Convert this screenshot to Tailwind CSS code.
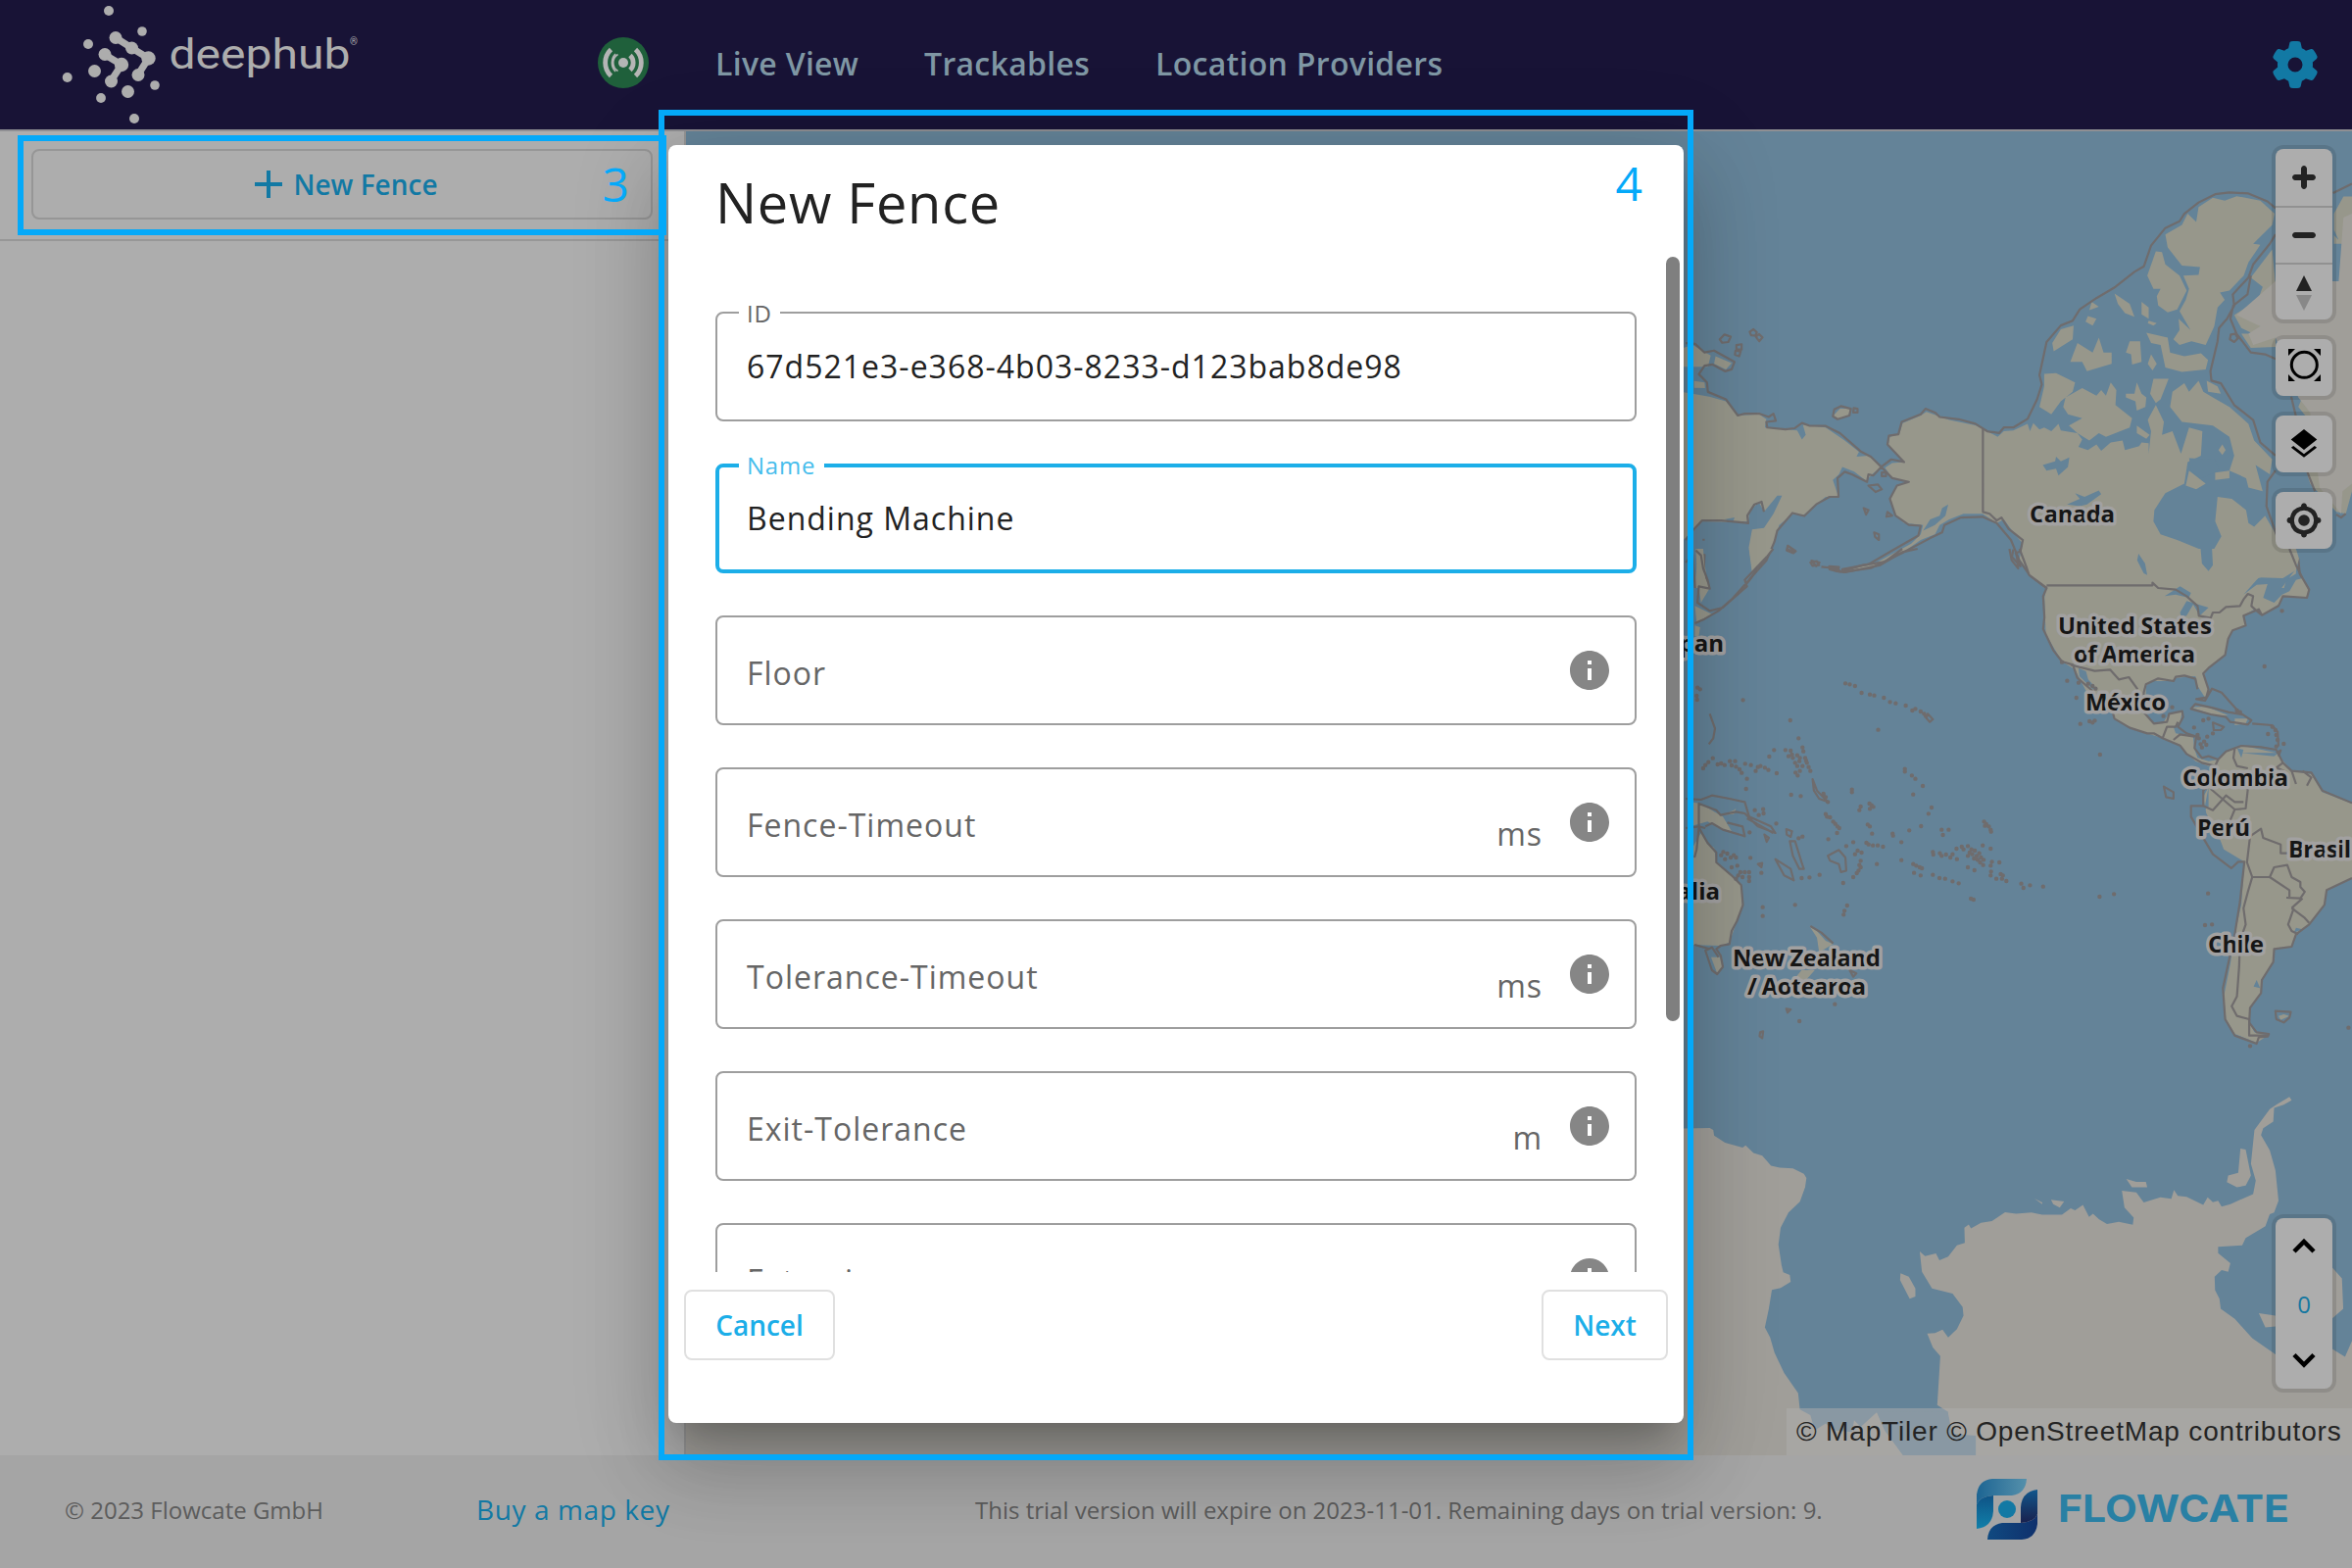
<!DOCTYPE html>
<html lang="en">
<head>
<meta charset="utf-8">
<title>deephub – New Fence</title>
<script src="https://cdn.jsdelivr.net/npm/@tailwindcss/browser@4"></script>
</head>
<body class="relative flex h-[1600px] w-[2400px] flex-col overflow-hidden bg-[#a5a5a5] font-['Open_Sans',sans-serif]">

<header class="flex h-[134px] w-full shrink-0 items-start border-b-2 border-[#8f8f93] bg-[#181336]">
  <svg class="h-[132px] w-[600px] shrink-0" viewBox="0 0 600 132" fill="#adadad">
    <g stroke="#adadad" stroke-linecap="round" stroke-linejoin="round" fill="none">
      <path d="M118 38.500L134.500 49L151.500 59.500L141 76" stroke-width="7"/>
      <path d="M106.500 55.500L124 66L113 83" stroke-width="7"/>
    </g>
    <circle cx="111" cy="11" r="5"/><circle cx="145" cy="32" r="4.800"/><circle cx="90" cy="45" r="5"/>
    <circle cx="118" cy="38.500" r="6.500"/><circle cx="134.500" cy="49" r="6.500"/><circle cx="151.500" cy="59.500" r="7.200"/><circle cx="141" cy="76.500" r="6.500"/>
    <circle cx="107" cy="55.500" r="6.500"/><circle cx="124" cy="66" r="7.200"/><circle cx="113.500" cy="83" r="6.500"/>
    <circle cx="96.500" cy="72.500" r="6.500"/><circle cx="68.700" cy="79" r="5"/><circle cx="130.500" cy="93.500" r="6.500"/>
    <circle cx="158" cy="87" r="4.800"/><circle cx="103" cy="100" r="4.900"/><circle cx="137" cy="121" r="5"/>
    <text x="172.500" y="70" font-family="Roboto" font-size="42" font-weight="400" textLength="185" lengthAdjust="spacingAndGlyphs">deephub</text>
    <text x="357" y="46" font-family="Roboto" font-size="10">®</text>
  </svg>
  <div class="flex h-[132px] w-[130px] shrink-0 items-center pt-0 pl-[9px] pb-1">
    <svg class="h-[54px] w-[54px]" viewBox="-27 -27 54 54" fill="none" stroke="#b5b5b5">
      <circle r="26" fill="#1f603b" stroke="none"/>
      <circle r="5" fill="#b5b5b5" stroke="none"/>
      <path d="M-12.500 -13.500A18.500 18.500 0 0 0 -12.500 13.500M12.500 -13.500A18.500 18.500 0 0 1 12.500 13.500" stroke-width="4.800"/>
      <path d="M7 -7.500A10.500 10.500 0 0 1 7 7.500" stroke-width="4.800"/>
      <path d="M-5.500 -8.500A10 10 0 0 0 -5.500 8.500M-8 -9A13 13 0 0 0 -8 9" stroke-width="1.600"/>
    </svg>
  </div>
  <nav class="flex h-[129px] grow items-center text-[32px] font-semibold tracking-[0.3px] whitespace-nowrap text-[#7f97a4]">
    <a class="w-[213px]">Live View</a><a class="w-[236px]">Trackables</a><a>Location Providers</a>
  </nav>
  <svg class="mt-[42px] mr-[34px] size-12" viewBox="0 0 512 512" fill="#1279a4"><path d="M495.9 166.6c3.2 8.7 .5 18.4-6.4 24.600l-43.300 39.400c1.100 8.300 1.700 16.800 1.700 25.400s-.6 17.100-1.700 25.400l43.300 39.400c6.900 6.200 9.600 15.900 6.400 24.600c-4.400 11.900-9.700 23.300-15.800 34.300l-4.700 8.100c-6.600 11-14 21.400-22.100 31.200c-5.900 7.200-15.700 9.600-24.500 6.800l-55.700-17.700c-13.400 10.300-28.200 18.900-44 25.400l-12.500 57.100c-2 9.100-9 16.300-18.200 17.800c-13.800 2.300-28 3.500-42.500 3.500s-28.700-1.200-42.500-3.500c-9.200-1.500-16.200-8.700-18.200-17.800l-12.500-57.100c-15.800-6.500-30.600-15.100-44-25.400L83.100 425.900c-8.800 2.800-18.600 .3-24.500-6.800c-8.100-9.800-15.500-20.200-22.100-31.200l-4.700-8.100c-6.100-11-11.400-22.400-15.800-34.300c-3.200-8.700-.5-18.400 6.400-24.600l43.300-39.400C64.600 273.100 64 264.600 64 256s.6-17.100 1.700-25.400L22.400 191.200c-6.900-6.200-9.600-15.900-6.400-24.600c4.400-11.900 9.700-23.300 15.800-34.300l4.700-8.100c6.600-11 14-21.400 22.100-31.200c5.900-7.200 15.700-9.600 24.500-6.800l55.700 17.700c13.400-10.300 28.200-18.900 44-25.400l12.500-57.100c2-9.100 9-16.300 18.200-17.800C227.300 1.200 241.500 0 256 0s28.700 1.200 42.500 3.500c9.200 1.500 16.200 8.700 18.200 17.800l12.500 57.100c15.800 6.500 30.600 15.100 44 25.400l55.700-17.700c8.800-2.800 18.600-.3 24.500 6.800c8.100 9.800 15.500 20.200 22.100 31.200l4.700 8.100c6.100 11 11.400 22.400 15.800 34.300zM256 336a80 80 0 1 0 0-160 80 80 0 1 0 0 160z"/></svg>
</header>

<main class="flex h-[1351px] w-full shrink-0">
  <aside class="flex w-[700px] shrink-0 border-r-2 border-[#959595] bg-[#a1a1a1] pr-[6px]">
    <div class="flex grow flex-col bg-[#adadad]">
      <div class="h-[112px] w-[698px] border-b-2 border-[#979797] pt-[18px] pl-8">
        <button class="flex h-[72px] w-[634px] items-center justify-center gap-[11px] rounded-lg border-2 border-[#969696] pl-[9px] text-[28px] font-semibold text-[#1279a4]">
          <svg class="size-7" viewBox="0 0 28 28" stroke="#1279a4" stroke-width="4"><path d="M14 0V28M0 14H28"/></svg>
          <span>New Fence</span>
        </button>
      </div>
    </div>
  </aside>

  <section class="relative w-[1700px] overflow-hidden bg-[#648398]">
    <svg class="block h-[1351px] w-[1700px]" viewBox="700 134 1700 1351">
      <!-- northern hemisphere -->
      <g transform="translate(1640 0) scale(.48469 .38265)">
        <g fill="#97978b">
          <path d="M155 1045L215 1058L250 1070L275 1108L320 1105L335 1118L332 1140L400 1148L410 1172L418 1160L412 1133L460 1140L500 1175L530 1205L525 1218L550 1215L577 1245L560 1262L545 1282L520 1258L495 1245L488 1265L475 1280L487 1325L460 1325L440 1345L415 1372L390 1372L362 1400L352 1445L330 1500L305 1528L298 1460L305 1412L330 1408L350 1370L368 1322L358 1322L330 1365L320 1340L300 1360L297 1390L260 1392L200 1390L180 1420L155 1445Z"/>
          <path d="M155 930L180 920L218 948L212 978H155ZM228 950L262 968L250 985L225 970ZM183 1016L205 1020L206 1035L183 1034ZM475 1110L490 1090L512 1090L508 1108L485 1117ZM190 1480L205 1500L212 1568H185Z"/>
          <path d="M585 1247L600 1235L625 1232L592 1185L595 1165L615 1158L622 1128L660 1108L672 1098L720 1120L775 1134L800 1150L822 1165L835 1150L855 1148L885 1130L890 1150L897 1128L910 1145L920 1140L935 1150L950 1130L955 1148L990 1155L1000 1172L992 1192L1012 1200L1030 1185L1040 1202L1060 1180L1085 1175L1090 1200L1120 1190L1125 1180L1140 1182V1210L1145 1150L1138 1120L1155 1080L1172 1125L1168 1160L1190 1150L1208 1210L1225 1140L1253 1150L1250 1215L1222 1232L1215 1290L1175 1315L1152 1360L1150 1390L1165 1425L1200 1440L1248 1465L1247 1500L1270 1525L1275 1470L1293 1430L1280 1390L1285 1325L1315 1330L1345 1360L1350 1395L1362 1405L1385 1375L1410 1430L1440 1465L1452 1490L1450 1530L1430 1545L1425 1568H920L890 1530L868 1490L875 1450L855 1420L835 1385L820 1395L790 1370L750 1370L720 1385L700 1400L690 1425L660 1440L620 1475L560 1510L500 1525L495 1520L560 1505L640 1450L660 1425L665 1400L625 1395L605 1370L597 1330L610 1295L635 1285L600 1275Z"/>
          <path d="M1175 625L1210 600L1222 570L1240 592L1245 552L1275 527L1300 535L1325 523L1375 535L1405 570L1400 600L1360 650L1375 653L1350 700L1340 735L1310 775L1290 780L1300 800L1285 820L1278 870L1260 920L1230 910L1205 920L1192 905L1205 880L1203 850L1228 880L1205 830L1218 800L1225 770L1213 735L1245 733L1248 712L1210 708L1180 660Z"/>
          <path d="M1155 670L1168 672L1175 705L1205 735L1220 775L1200 825L1180 833L1160 815L1157 790L1165 770L1150 770L1137 735ZM1068 783L1100 810L1110 845L1090 835L1075 810ZM1020 805L1035 818L1015 827ZM1012 843L1030 850L1022 868L1007 858ZM1125 805L1140 820L1140 850L1125 838ZM982 868L980 905L940 937L937 915L955 878ZM990 915L1022 940L1035 900L1045 940L1062 940L1062 970L1010 990L1000 965L975 965ZM1100 910L1122 910L1125 965L1105 972L1103 945L1092 940ZM1145 945L1157 970L1148 988L1138 970ZM1140 855L1157 862L1150 868L1138 862ZM1135 887L1180 900L1185 940L1215 950L1250 942L1265 960L1260 985L1210 992L1175 980L1165 920L1145 915ZM920 997L945 995L985 1020L980 1045L955 1070L935 1105L910 1085L920 1030ZM965 1060L1000 1035L1030 1055L1040 1040L1050 1055L1060 1020L1072 1040L1070 1080L1105 1115L1100 1140L1050 1165L1035 1155L1015 1175L990 1155L972 1135L1000 1115L970 1105L960 1085ZM1092 1050L1110 1050L1115 1020L1125 1050L1135 1060L1133 1085L1115 1095L1112 1070L1092 1060ZM1150 1010L1182 1010L1165 1065L1155 1075L1143 1050ZM1115 1135L1142 1160L1135 1170L1115 1155ZM1190 1045L1215 1022L1225 1045L1245 1015L1255 1045L1275 1060L1310 1085L1350 1130L1362 1175L1400 1225L1395 1265L1365 1240L1380 1310L1350 1300L1345 1275L1310 1255L1310 1275L1280 1280V1260L1310 1255L1320 1215L1310 1165L1275 1135L1210 1125L1185 1085ZM1262 1015L1285 1030L1292 1050L1265 1045ZM1225 1255L1260 1290L1240 1305L1218 1295ZM1295 1185L1302 1200L1295 1213L1287 1200Z"/>
          <path d="M1355 740L1400 665L1407 760L1380 800L1350 840L1375 870L1407 900V925L1355 928L1335 890L1360 890L1335 875L1320 840L1370 800L1380 765ZM1530 570L1550 524H1568V650H1530ZM1455 1085L1465 1055L1500 1100L1568 1290V1310L1555 1370L1535 1365L1480 1290L1470 1250L1490 1140Z"/>
        </g>
        <path fill="#a09e99" d="M1325 840L1407 750H1540L1550 580L1568 570V1290L1548 1310L1545 1370L1500 1300L1480 1100L1455 1060L1407 900L1360 920L1350 890L1375 870Z"/>
        <path fill="#648398" d="M917 1240L943 1230L945 1218L955 1230L973 1220L970 1245L950 1268L945 1250L925 1255ZM968 1345L995 1330L985 1315L1005 1325L1035 1308L1040 1318L1010 1345L995 1350ZM1120 1478L1130 1500L1138 1535L1130 1530L1115 1500ZM247 1385L268 1380L265 1392ZM1530 612L1540 640L1528 625ZM718 1345L712 1375L690 1400L665 1415L680 1385L700 1375L705 1355ZM1245 1470L1265 1465V1480ZM1352 1550L1380 1538L1420 1540L1440 1515L1448 1520L1420 1568H1345ZM1225 1222L1280 1225L1288 1255L1250 1275L1230 1255Z"/>
        <g fill="none" stroke="#6f6c6d" stroke-width="2.200" stroke-linejoin="round">
          <path vector-effect="non-scaling-stroke" d="M165 915L185 917L205 940L225 935L268 965L262 985L248 990L222 972L205 975L193 998L210 1020L212 1045L250 1065L275 1108L290 1103L320 1103L340 1112L350 1103L355 1122L335 1125L337 1140L375 1145L395 1142L410 1128L425 1135L460 1136L490 1155L535 1205L555 1218L577 1245L598 1225L625 1232L590 1185L593 1162L613 1158L620 1125L660 1105L670 1090L690 1100L700 1112L740 1118L775 1130L800 1150L825 1155L835 1140L855 1140L885 1117L905 1065L915 1025L910 1000L925 912L955 868L980 855L995 825L1030 795L1070 765L1110 725L1130 710L1145 655L1175 608L1205 590L1215 570L1245 540L1280 518L1310 513L1350 516L1390 537L1407 555"/>
          <path vector-effect="non-scaling-stroke" d="M1407 625L1395 650L1360 705L1350 740L1317 785L1320 815L1305 850L1288 875L1285 910L1270 990L1272 1015L1292 1022L1320 1080L1360 1120L1375 1180L1407 1215M1407 1255L1390 1285L1388 1350L1410 1430L1440 1465L1455 1490L1458 1530L1475 1568M1355 735L1348 785L1318 815L1312 850L1325 890L1355 940L1385 945L1407 957M1440 1058L1450 1110L1452 1160L1475 1262L1490 1310M1535 1372L1545 1380L1555 1370M1528 515L1568 490M1328 902L1320 912L1311 905L1313 892L1322 890Z"/>
          <path vector-effect="non-scaling-stroke" d="M577 1245L560 1268L550 1265L547 1285L515 1265L500 1258L485 1275L487 1325L468 1325L440 1345L415 1376L390 1368L358 1415L352 1445L335 1495L310 1530L298 1550L285 1568M330 1365L325 1338L310 1345L295 1375L297 1395L240 1388L200 1388L180 1415L165 1440M577 1245L600 1275L635 1285L610 1295L595 1330L607 1375L635 1400L660 1402L655 1428L600 1468L550 1505L495 1518L497 1525L555 1515L620 1475L680 1435L705 1420L710 1400L745 1380L790 1378L820 1395L850 1440L868 1495L890 1535L925 1568"/>
          <path vector-effect="non-scaling-stroke" d="M791 1142V1365L805 1370L820 1388L830 1380L845 1410L875 1440L870 1470L860 1475L870 1510L852 1485L855 1465M925 1560H1148V1553L1160 1568M475 1110L478 1092L492 1083L513 1090L510 1108L485 1118ZM519 1088L527 1090V1100L518 1100ZM550 1295L570 1292L578 1305L565 1312ZM540 1355L550 1360L545 1372ZM562 1420L572 1425V1440L564 1432ZM380 1455L397 1470L392 1475L378 1468ZM430 1495L447 1500L440 1510ZM468 1510L488 1512L485 1524L468 1518ZM578 1260H587V1270H578ZM237 905L247 892L260 898L255 912L242 914ZM272 920L283 918V932H272ZM270 935L281 937L278 950L269 946ZM300 885L308 878L315 886L312 895L303 894ZM313 898L320 891L327 900L320 910ZM203 1437V1442M165 1500L180 1480L185 1568M190 1475L205 1480L203 1530L215 1568M590 1365L600 1375L588 1378Z"/>
        </g>
      </g>
      <!-- Pacific and the Americas -->
      <g transform="translate(1700 560) scale(.44643 .33333)">
        <g fill="#97978b">
          <path d="M815 0H1440L1447 30L1440 65L1410 90L1355 88L1320 140L1350 110L1375 108L1365 150L1390 165L1408 140L1425 130L1440 95L1455 90L1470 125L1465 150L1410 145L1400 170L1365 200L1345 185L1320 205L1325 235L1295 250L1285 280L1278 325L1240 365L1230 385L1240 430L1232 455L1215 420L1210 390L1165 395L1160 405L1110 405L1097 420V500L1110 530L1135 535L1150 505L1180 497L1175 530L1160 545L1165 565L1205 575L1207 610L1215 640L1240 650L1262 645L1280 620L1320 603L1395 625L1430 680L1475 690L1500 745L1568 780V1010L1510 1045L1505 1090L1470 1150L1440 1180L1430 1220L1390 1225L1388 1265L1360 1320L1360 1365L1335 1405L1333 1450L1345 1480L1375 1490L1350 1512L1300 1485L1280 1440L1275 1370L1290 1270L1300 1180L1315 1090L1322 958L1275 920L1265 885L1235 810L1228 760L1240 730L1262 690V662L1240 665L1210 650L1190 625L1175 600L1135 580L1105 567L1060 545L1025 520L1015 490L960 435L935 370L905 345L885 300L868 260L865 150L870 120L830 80Z"/>
          <path d="M190 0H245L215 40L198 72ZM68 0H85L90 90L100 120L80 165L72 90ZM66 175L105 200L70 225ZM66 235L78 240L75 268H66ZM55 775L80 780L110 805L130 820L150 865L120 855L95 835L55 850ZM155 800L160 795L155 812L130 815ZM50 940L80 870L95 905L110 915L115 960L150 1000L172 1030L174 1090L162 1140L145 1205L125 1215L50 1212ZM103 1250H128V1280L117 1300ZM328 1155L345 1170L365 1200L382 1210L350 1235L345 1190ZM285 1330L310 1290L340 1290L320 1320ZM1200 485L1235 483L1285 510L1260 512ZM1300 520L1330 520L1325 535L1300 540ZM1400 1430L1412 1425L1425 1430L1405 1442Z"/>
        </g>
        <path fill="#648398" d="M1080 15L1095 45L1100 80L1092 75L1077 35ZM1222 0H1248L1250 50L1240 68L1225 45ZM1140 145L1175 115L1200 135L1195 150L1165 140ZM1175 195L1190 160L1240 180L1220 205L1205 170L1190 205L1178 210ZM943 365L960 375L965 400L985 430L975 430L945 390ZM1305 610L1320 615L1315 640ZM1315 625L1400 625L1390 635ZM1350 1320L1358 1345L1343 1340ZM1240 730L1230 800L1240 790ZM1440 1160L1455 1165L1435 1175Z"/>
        <g fill="none" stroke="#6f6c6d" stroke-width="2.200" stroke-linejoin="round">
          <path vector-effect="non-scaling-stroke" d="M785 0L790 35L805 60L802 20M808 0L825 60L830 80L870 120L862 145L865 210L862 245L885 310L905 345L930 355L940 395L975 435M870 112H1112V104L1125 120L1165 125L1190 145L1215 175L1218 205L1245 212L1250 195L1265 195L1280 178L1312 175L1320 155L1330 138L1342 145L1338 175L1350 190L1362 203L1400 175L1410 145L1465 150L1470 125L1455 90L1440 50L1425 0M1362 203L1355 185L1320 205L1325 235L1295 250L1285 275L1278 325L1240 365L1228 382L1240 430L1235 455L1212 460L1232 465L1248 428L1270 440L1310 500L1338 525L1330 538L1290 530L1280 515L1245 507L1200 490L1210 475L1250 487L1285 500L1320 508"/>
          <path vector-effect="non-scaling-stroke" d="M1215 430L1210 398L1185 388L1165 392L1160 405L1125 397L1097 415L1092 440V500L1115 535L1145 530L1150 505L1180 497L1182 515L1170 545L1190 565L1212 575L1208 610L1225 640L1240 635L1262 645L1280 620L1315 603L1360 607L1395 615L1410 655L1430 680L1475 685L1500 740L1568 778M1568 1008L1510 1045L1505 1090L1470 1150L1440 1180L1430 1218L1390 1225L1388 1265L1362 1320L1360 1360L1335 1405L1333 1450L1350 1480L1378 1485L1375 1493L1355 1495L1350 1515L1300 1490L1278 1440L1273 1345L1290 1240L1300 1180L1312 1080L1322 958L1308 958L1292 978L1250 935L1230 890L1200 820V787H1228V740L1250 712M1262 645L1255 665L1225 655L1190 628L1175 602L1135 580L1115 565H1100L1060 548L1025 520L1020 495"/>
          <path vector-effect="non-scaling-stroke" d="M925 355L980 374L1015 370L1035 400L1058 393L1078 430M1135 580L1145 545H1165L1170 530M1160 585L1175 568L1208 575M1300 610L1297 640L1305 665L1330 672M1410 655L1395 670L1420 685M1455 680L1475 700L1465 725M1430 680L1440 720M1330 735L1325 795L1300 798L1245 735M1228 787L1250 800L1280 755L1300 775L1320 775M1300 798L1290 830M1335 880L1360 857L1365 885L1405 905V932H1420M1335 880L1328 960L1340 1005L1380 1005L1390 975L1420 968L1430 1005L1450 1020V1035L1460 1050L1450 1070L1418 1068M1380 1005L1425 1045V1065M1435 1100L1422 1150L1430 1170L1445 1180M1430 1100L1460 1130L1470 1145M1430 1100L1455 1070M1340 1005L1330 1050L1320 1100L1325 1150L1312 1200L1310 1280L1305 1370L1293 1400L1305 1430L1333 1440V1490L1378 1490M1250 532L1275 545L1268 555L1252 555ZM1138 728L1160 745V765L1143 760ZM1393 1415L1428 1418L1425 1435L1412 1450L1395 1440ZM1340 535L1385 540L1398 560L1400 605M1395 625L1405 617L1400 635"/>
          <path vector-effect="non-scaling-stroke" d="M245 0L190 95L150 155L120 190L88 215L66 228M230 25L180 95L185 115L130 180L100 190L72 165L75 115L100 122L95 95L85 60L80 20L68 5M275 0L295 10M330 42L345 38L350 50L335 52ZM370 55L395 70L410 72L490 50L540 10L575 0M355 55L390 60L400 70L450 50L500 40L540 0M45 765L80 768L105 755L145 765L180 775L190 820L240 850L250 870L210 850L180 810L160 805L125 815L115 800L75 780V850L90 855M90 850L105 840L130 860L180 880L175 850L140 838M45 855L75 850L80 865L95 900L115 930L115 960L150 1000L172 1030L176 1090L162 1140L150 1170L145 1210L125 1215L115 1225L125 1245L130 1280L117 1302L105 1290L90 1230L105 1220L120 1250M65 1212L100 1225M75 855L70 920L65 945M283 895L295 895L310 960L315 980L305 980L290 940ZM250 950L285 980L292 1015L270 1000ZM370 940L395 922L410 945L412 985L400 990L395 965L375 955ZM335 705L345 740L370 775L350 765L338 740ZM225 875L235 885L230 897ZM275 858L288 865L285 882L276 875ZM185 825L245 870M330 1155L355 1175L382 1208M420 1290L435 1300L428 1310ZM275 1408L285 1410L278 1420ZM215 1480L222 1477L220 1498L214 1492ZM598 505L610 522L603 530L595 518ZM210 965L220 962L218 975ZM100 505L112 550L108 580L98 598"/>
        </g>
        <path vector-effect="non-scaling-stroke" fill="none" stroke="#6f6c6d" stroke-width="4.400" stroke-linecap="round" d="M410 412h0M420 415h0M432 420h0M447 441h0M466 446h0M476 449h0M498 456h0M512 469h0M525 473h0M548 480h0M563 495h0M570 490h0M582 498h0M590 505h0M594 512h0M176 463h0M284 525h0M485 554h0M303 580h0M247 616h0M236 636h0M273 616h0M285 618h0M312 608h0M314 620h0M280 635h0M290 640h0M300 632h0M306 640h0M295 655h0M305 650h0M318 640h0M322 655h0M312 665h0M300 665h0M326 668h0M330 680h0M306 680h0M296 685h0M301 694h0M320 648h0M288 630h0M97 653h0M107 641h0M90 662h0M85 672h0M118 660h0M126 657h0M134 662h0M146 650h0M158 650h0M150 663h0M160 667h0M168 675h0M173 686h0M181 658h0M194 662h0M185 704h0M205 680h0M210 668h0M216 665h0M226 670h0M234 677h0M253 687h0M183 735h0M286 753h0M308 757h0M360 750h0M365 760h0M370 775h0M425 737h0M425 745h0M546 674h0M546 682h0M562 694h0M570 704h0M587 726h0M565 752h0M445 789h0M442 800h0M465 780h0M470 785h0M474 790h0M466 796h0M607 792h0M600 811h0M222 797h0M223 810h0M203 800h0M212 815h0M252 841h0M365 812h0M368 820h0M375 822h0M382 835h0M387 842h0M392 850h0M396 855h0M461 844h0M466 850h0M471 872h0M583 849h0M556 862h0M518 872h0M519 878h0M391 870h0M371 889h0M312 881h0M303 886h0M428 898h0M458 900h0M463 905h0M473 908h0M484 908h0M496 912h0M538 898h0M630 860h0M646 860h0M633 876h0M727 835h0M732 843h0M738 850h0M742 860h0M729 848h0M743 866h0M610 928h0M611 936h0M626 932h0M630 940h0M640 936h0M650 945h0M655 935h0M664 918h0M665 950h0M676 912h0M680 920h0M690 910h0M698 920h0M706 924h0M694 930h0M690 940h0M700 935h0M710 940h0M716 932h0M704 948h0M712 952h0M720 945h0M726 952h0M718 960h0M725 968h0M724 908h0M742 918h0M745 958h0M762 960h0M742 970h0M743 988h0M742 1000h0M755 1010h0M765 996h0M770 1000h0M768 1010h0M778 1017h0M690 975h0M705 984h0M812 1025h0M817 1038h0M832 1030h0M862 1034h0M991 1065h0M1024 1057h0M697 1071h0M703 1074h0M669 1024h0M655 1018h0M638 1010h0M625 1008h0M610 998h0M582 1000h0M567 992h0M538 953h0M565 965h0M572 970h0M580 975h0M585 978h0M482 965h0M447 930h0M438 924h0M432 935h0M412 910h0M445 955h0M442 968h0M445 975h0M440 985h0M436 993h0M428 1005h0M405 1023h0M351 998h0M328 1006h0M310 1008h0M218 992h0M295 1090h0M221 1097h0M221 1124h0M414 1092h0M408 1108h0M406 1120h0M131 928h0M126 938h0M140 933h0M148 945h0M155 938h0M160 945h0M135 950h0M150 975h0M163 970h0M170 990h0M180 990h0M190 990h0M190 1005h0M165 1000h0M175 1005h0M160 1010h0M190 1017h0M193 946h0M191 868h0M386 1394h0M305 1446h0M1232 1152h0M1248 1150h0M1239 1055h0M992 630h0M947 536h0M968 528h0M980 526h0M975 532h0M917 404h0M938 456h0M943 410h0M905 347h0M1368 360h0M1408 190h0M1228 525h0M1240 520h0M1207 547h0M1215 570h0M1218 580h0M1222 598h0M1230 590h0M1237 575h0M1235 600h0M1250 565h0M1225 608h0M1376 567h0M1386 545h0M1393 555h0M1395 570h0M1398 585h0M1412 597h0M1395 605h0M1305 495h0M1312 500h0M1335 1522h0M1560 1466h0M1157 485h0M1137 512h0M72 425h0M78 430h0M70 450h0M71 462h0M975 420h0M982 428h0M965 413h0"/>
      </g>
      <!-- Antarctica -->
      <g transform="translate(1700 1060) scale(.44643 .34439)">
        <path fill="#a09e99" d="M-2300 266H40L100 264L108 270L110 287L135 308L175 322L182 316L200 338L220 346L240 376L260 382L290 384L315 400L321 412L318 440L306 483L280 515L262 560L257 610L264 670L268 692L283 700L285 720L262 738L242 744L235 800L226 855L238 885L248 930L270 990L302 1050L306 1098L330 1115L340 1160L365 1140L385 1160L425 1165L430 1130L445 1150L482 1106L500 1160L542 1234H-2300ZM542 1234H708V1176L650 1170L644 1105L620 1085L627 940L610 915L597 873L615 872L632 862L645 885L665 860L680 820L678 795L655 755L608 740L585 690L580 630L592 644L617 636L625 656L645 645L665 612L683 605L682 560L692 550L697 562L720 545L745 540L775 514L800 518L835 515L860 521H905L925 502L935 508L953 492L967 528L976 518L990 535L1008 549L1035 542L1067 551L1069 530L1048 500L1042 450L1075 455L1092 485L1130 470L1155 474L1161 448L1170 465L1190 468L1228 492L1238 470L1250 484L1262 480L1270 497L1290 490L1342 460L1348 420L1337 370L1345 270L1380 208L1395 195L1425 172L1430 182L1412 195L1390 205L1388 245L1365 265L1360 285L1380 330L1393 390L1400 480L1390 515L1380 520L1370 555L1325 590L1317 612L1262 616V635L1290 665L1285 690L1270 685L1254 705L1255 745L1265 770L1268 800L1300 830L1340 887L1393 935L1524 920L1552 942L1568 895V1234H708ZM536 695L555 705L570 740L570 764L557 770L535 715ZM1052 415L1075 424H1097L1100 440L1065 440ZM842 473L860 485V490ZM880 477L910 482L900 500L885 490ZM1313 325L1325 328L1337 405L1325 435L1305 440L1282 425L1285 405L1308 397ZM1355 813L1393 820V852L1370 855ZM1523 678L1545 710L1548 800L1523 828Z"/>
        <path fill="#648398" d="M482 1106L500 1160L542 1234H708V1176H655L644 1105Z"/>
      </g>
      <!-- country labels -->
      <g font-family="Open Sans" font-size="24" font-weight="700" fill="#161616" stroke="#a2a1a1" stroke-width="7" stroke-linejoin="round" paint-order="stroke">
        <text x="2071" y="532.500" textLength="87">Canada</text>
        <text x="2100" y="647" textLength="157">United States</text>
        <text x="2116" y="676" textLength="124">of America</text>
        <text x="2128" y="725" textLength="82">México</text>
        <text x="2227" y="801.500" textLength="108">Colombia</text>
        <text x="2242" y="852.500" textLength="54">Perú</text>
        <text x="2335" y="875" textLength="64">Brasil</text>
        <text x="2253" y="971.500" textLength="57">Chile</text>
        <text x="1768" y="986" textLength="151">New Zealand</text>
        <text x="1783" y="1015" textLength="121">/ Aotearoa</text>
        <text x="1759" y="665" text-anchor="end">Japan</text>
        <text x="1755" y="918" text-anchor="end">Australia</text>
      </g>
    </svg>

    <div class="absolute top-[18px] right-5 flex w-[58px] flex-col gap-5">
      <div class="flex h-[174px] flex-col rounded-lg bg-[#adadad] shadow-[0_0_0_4px_rgba(0,0,0,0.1)]">
        <svg class="h-[58px] w-[58px]" viewBox="0 0 29 29" fill="#222"><path d="M14.500 8.500c-.75 0-1.500.75-1.500 1.500v3h-3c-.75 0-1.500.75-1.500 1.500S9.250 16 10 16h3v3c0 .75.75 1.500 1.500 1.500S16 19.750 16 19v-3h3c.75 0 1.500-.75 1.500-1.500S19.750 13 19 13h-3v-3c0-.75-.75-1.500-1.500-1.500z"/></svg>
        <svg class="h-[58px] w-[58px] border-t-2 border-[#919191]" viewBox="0 0 29 28" fill="#222"><path d="M10 12.500c-.75 0-1.500.75-1.500 1.500S9.250 15.500 10 15.500h9c.75 0 1.500-.75 1.500-1.500S19.750 12.500 19 12.500h-9z"/></svg>
        <svg class="h-[58px] w-[58px] border-t-2 border-[#919191]" viewBox="0 0 29 28" fill="#222"><path d="M10.500 13.500l4-8 4 8z"/><path d="M10.500 15.500l4 8 4-8z" fill="#888"/></svg>
      </div>
      <div class="h-[58px] rounded-lg bg-[#adadad] shadow-[0_0_0_4px_rgba(0,0,0,0.1)]">
        <svg class="size-[58px]" viewBox="0 0 58 58"><circle cx="29.300" cy="26.300" r="13" fill="none" stroke="#000" stroke-width="3"/><path d="M13 10H20L13 17ZM46 10V17L39 10ZM13 43V36L20 43ZM46 43H39L46 36Z"/></svg>
      </div>
      <div class="h-[58px] rounded-lg bg-[#adadad] shadow-[0_0_0_4px_rgba(0,0,0,0.1)]">
        <svg class="size-[58px]" viewBox="0 0 58 58"><path d="M29 14L42.300 24.500L29 35L15.700 24.500ZM15.900 32.800L18.200 31L29 39.300L39.800 31L42.100 32.800L29 42.800Z"/></svg>
      </div>
      <div class="h-[58px] rounded-lg bg-[#adadad] shadow-[0_0_0_4px_rgba(0,0,0,0.1)]">
        <svg class="size-[58px]" viewBox="0 0 20 20" fill="#222"><path d="M10 4C9 4 9 5 9 5v.1A5 5 0 0 0 5.100 9H5s-1 0-1 1 1 1 1 1h.1A5 5 0 0 0 9 14.900v.1s0 1 1 1 1-1 1-1v-.1a5 5 0 0 0 3.900-3.900h.1s1 0 1-1-1-1-1-1h-.1A5 5 0 0 0 11 5.100V5s0-1-1-1zm0 2.500a3.500 3.500 0 1 1 0 7 3.500 3.500 0 1 1 0-7z"/><circle cx="10" cy="10" r="2"/></svg>
      </div>
    </div>

    <div class="absolute right-5 bottom-[68px] flex h-[174px] w-[58px] flex-col items-center justify-between rounded-lg bg-[#adadad] shadow-[0_0_0_4px_rgba(0,0,0,0.1)]">
      <svg class="size-[58px]" viewBox="0 0 58 58" fill="none" stroke="#000" stroke-width="4.500"><path d="M19 34L29 24L39 34"/></svg>
      <span class="pt-0.5 text-2xl text-[#1577a0]">0</span>
      <svg class="size-[58px]" viewBox="0 0 58 58" fill="none" stroke="#000" stroke-width="4.500"><path d="M19 23.500L29 33.500L39 23.500"/></svg>
    </div>

    <div class="absolute right-0 bottom-0 flex h-12 w-[577px] items-center bg-[#adadad]/50 pl-2.5 font-['Liberation_Sans',sans-serif] text-[28px] tracking-[0.83px] whitespace-nowrap text-[#242424]">© MapTiler © OpenStreetMap contributors</div>
  </section>
</main>

<footer class="flex h-[115px] w-full items-center bg-[#a5a5a5] pb-[3px] pl-[66px] text-2xl whitespace-nowrap text-[#5c5c5c]">
  <span class="w-[420px]">© 2023 Flowcate GmbH</span>
  <a class="w-[509px] text-[28px] tracking-[0.6px] text-[#1279a4]">Buy a map key</a>
  <span class="w-[1021px]">This trial version will expire on 2023-11-01. Remaining days on trial version: 9.</span>
  <svg class="-mt-1 h-[70px] w-[330px]" viewBox="2016 1504 330 70">
    <defs>
      <linearGradient id="t"><stop stop-color="#1d6593"/><stop offset="1" stop-color="#5590ab"/></linearGradient>
      <linearGradient id="l" x2="0" y2="1"><stop stop-color="#0f5386"/><stop offset="1" stop-color="#1080aa"/></linearGradient>
      <linearGradient id="r" x2="0" y2="1"><stop stop-color="#11578c"/><stop offset="1" stop-color="#18204d"/></linearGradient>
      <linearGradient id="b"><stop stop-color="#104a81"/><stop offset="1" stop-color="#0f306c"/></linearGradient>
    </defs>
    <path fill="url(#t)" d="M2017 1535V1525Q2019 1510 2033 1509H2068Q2067 1524 2053 1526H2034Q2020 1527 2017 1535Z"/>
    <path fill="url(#l)" d="M2017 1560V1535Q2020 1527 2034 1526V1542Q2033 1558 2017 1560Z"/>
    <path fill="url(#b)" d="M2028 1571Q2029 1556 2043 1554H2062Q2076 1553 2079 1545V1555Q2077 1570 2063 1571Z"/>
    <path fill="url(#r)" d="M2079 1520V1545Q2076 1553 2062 1554V1538Q2063 1522 2079 1520Z"/>
    <circle cx="2048" cy="1540" r="9" fill="#1279a4"/>
    <text x="2100" y="1553" font-family="Inter" font-size="38.500" font-weight="700" fill="#2980a4" textLength="236" lengthAdjust="spacingAndGlyphs">FLOWCATE</text>
  </svg>
</footer>

<!-- dialog -->
<div class="absolute top-[148px] left-[682px] flex h-[1304px] w-[1036px] flex-col rounded-lg bg-white text-[#222] shadow-[0_22px_30px_-14px_rgba(0,0,0,0.2),0_48px_76px_6px_rgba(0,0,0,0.14),0_18px_92px_16px_rgba(0,0,0,0.12)]">
  <h1 class="h-[114px] pt-4 pl-12 text-[56px] leading-[84px] tracking-[0.7px]">New Fence</h1>
  <div class="relative h-[1036px] overflow-hidden pt-14 pr-12 pl-12">
    <div class="flex flex-col gap-[43px] text-[32px] tracking-[1px] text-[#666]">
      <div class="relative flex h-28 shrink-0 items-center rounded-lg border-2 border-[#9e9e9e] pl-[30px] text-[#222]">
        <span class="absolute -top-[16px] left-[22px] h-8 w-[42px] bg-white pl-2 text-2xl leading-8 tracking-[0.75px] text-[#666]">ID</span>
        <span>67d521e3-e368-4b03-8233-d123bab8de98</span>
      </div>
      <div class="relative flex h-28 shrink-0 items-center rounded-lg border-4 border-[#1caee8] pl-7 text-[#222]">
        <span class="absolute -top-[18px] left-5 h-8 w-[87px] bg-white pl-2 text-2xl leading-8 tracking-[0.75px] text-[#46bdec]">Name</span>
        <span>Bending Machine</span>
      </div>
      <div class="flex h-28 shrink-0 items-center rounded-lg border-2 border-[#9e9e9e] pr-[22px] pl-[30px]">
        <span class="grow pt-[5px]">Floor</span>
        <svg class="size-12" viewBox="0 0 24 24" fill="#868686"><path d="M12 2C6.480 2 2 6.480 2 12s4.480 10 10 10 10-4.480 10-10S17.520 2 12 2zm1 15h-2v-6h2v6zm0-8h-2V7h2v2z"/></svg>
      </div>
      <div class="flex h-28 shrink-0 items-center rounded-lg border-2 border-[#9e9e9e] pr-[22px] pl-[30px]">
        <span class="grow pt-[5px]">Fence-Timeout</span><span class="pt-6 pr-6">ms</span>
        <svg class="size-12" viewBox="0 0 24 24" fill="#868686"><path d="M12 2C6.480 2 2 6.480 2 12s4.480 10 10 10 10-4.480 10-10S17.520 2 12 2zm1 15h-2v-6h2v6zm0-8h-2V7h2v2z"/></svg>
      </div>
      <div class="flex h-28 shrink-0 items-center rounded-lg border-2 border-[#9e9e9e] pr-[22px] pl-[30px]">
        <span class="grow pt-[5px]">Tolerance-Timeout</span><span class="pt-6 pr-6">ms</span>
        <svg class="size-12" viewBox="0 0 24 24" fill="#868686"><path d="M12 2C6.480 2 2 6.480 2 12s4.480 10 10 10 10-4.480 10-10S17.520 2 12 2zm1 15h-2v-6h2v6zm0-8h-2V7h2v2z"/></svg>
      </div>
      <div class="flex h-28 shrink-0 items-center rounded-lg border-2 border-[#9e9e9e] pr-[22px] pl-[30px]">
        <span class="grow pt-[5px]">Exit-Tolerance</span><span class="pt-6 pr-6">m</span>
        <svg class="size-12" viewBox="0 0 24 24" fill="#868686"><path d="M12 2C6.480 2 2 6.480 2 12s4.480 10 10 10 10-4.480 10-10S17.520 2 12 2zm1 15h-2v-6h2v6zm0-8h-2V7h2v2z"/></svg>
      </div>
      <div class="flex h-28 shrink-0 items-center rounded-lg border-2 border-[#9e9e9e] pr-[22px] pl-[30px]">
        <span class="grow pt-[5px]">Extrusion</span>
        <svg class="size-12" viewBox="0 0 24 24" fill="#868686"><path d="M12 2C6.480 2 2 6.480 2 12s4.480 10 10 10 10-4.480 10-10S17.520 2 12 2zm1 15h-2v-6h2v6zm0-8h-2V7h2v2z"/></svg>
      </div>
    </div>
    <div class="absolute top-0 right-1 h-[780px] w-3.5 rounded-full bg-[#7f7f7f]"></div>
  </div>
  <div class="flex justify-between pt-[18px] pr-4 pl-4 text-[28px] font-semibold text-[#1caee8]">
    <button class="h-[72px] w-[154px] rounded-lg border-2 border-[#e0e0e0]">Cancel</button>
    <button class="h-[72px] w-[129px] rounded-lg border-2 border-[#e0e0e0]">Next</button>
  </div>
</div>

<!-- numbered callouts -->
<div class="absolute top-[138px] left-[18px] flex h-[102px] w-[662px] items-center justify-end border-6 border-[#04a9f9] pr-[32px] pb-0.5 text-5xl text-[#04a9f9]">3</div>
<div class="absolute top-[112px] left-[672px] h-[1378px] w-[1056px] border-6 border-[#04a9f9] pt-[45px] pr-[46px] text-right text-5xl text-[#04a9f9]">4</div>
</body>
</html>
